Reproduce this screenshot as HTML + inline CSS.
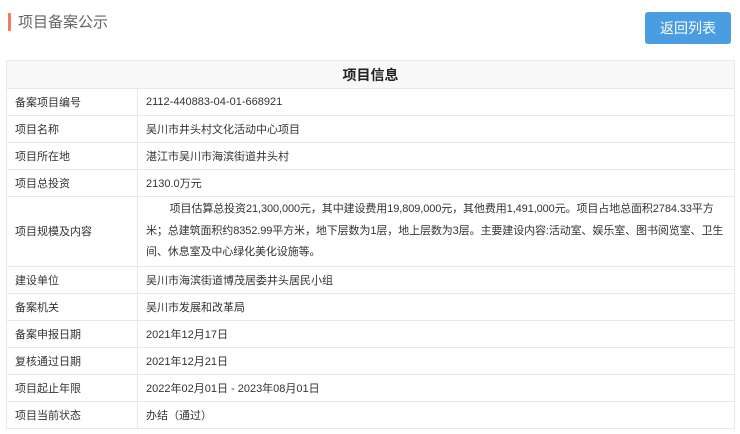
<!DOCTYPE html>
<html><head><meta charset="utf-8"><style>
body{margin:0;width:740px;height:434px;background:#fff;font-family:"Liberation Sans","Noto Sans CJK SC",sans-serif;color:#333;overflow:hidden;position:relative}
.bar{position:absolute;left:8px;top:13px;width:3px;height:18px;background:#f37b5e}
.ttl{position:absolute;left:18px;top:13px;font-size:15px;color:#666;line-height:20px}
.btn{position:absolute;left:645px;top:12px;width:86px;height:32px;background:#4a9de0;border-radius:3px;color:#fff;font-size:14px;line-height:32px;text-align:center}
table{position:absolute;left:6px;top:60px;width:729px;border-collapse:collapse;font-size:11px}
td,th{border:1px solid #e8e8e8;padding:0 8px;height:26px}
th{background:#f8f8f8;font-size:14px;font-weight:bold;color:#222;height:27px}
td.l{width:114px}
td.big{line-height:21.5px;padding-top:2px;padding-bottom:2px;letter-spacing:-0.1px}
</style></head><body>
<div class="bar"></div><div class="ttl">项目备案公示</div>
<div class="btn">返回列表</div>
<table>
<tr><th colspan="2">项目信息</th></tr>
<tr><td class="l">备案项目编号</td><td>2112-440883-04-01-668921</td></tr>
<tr><td class="l">项目名称</td><td>吴川市井头村文化活动中心项目</td></tr>
<tr><td class="l">项目所在地</td><td>湛江市吴川市海滨街道井头村</td></tr>
<tr><td class="l">项目总投资</td><td>2130.0万元</td></tr>
<tr><td class="l">项目规模及内容</td><td class="big">&nbsp;&nbsp;&nbsp;&nbsp;&nbsp;&nbsp;&nbsp;&nbsp;项目估算总投资21,300,000元，其中建设费用19,809,000元，其他费用1,491,000元。项目占地总面积2784.33平方<br>米；总建筑面积约8352.99平方米，地下层数为1层，地上层数为3层。主要建设内容:活动室、娱乐室、图书阅览室、卫生<br>间、休息室及中心绿化美化设施等。</td></tr>
<tr><td class="l">建设单位</td><td>吴川市海滨街道博茂居委井头居民小组</td></tr>
<tr><td class="l">备案机关</td><td>吴川市发展和改革局</td></tr>
<tr><td class="l">备案申报日期</td><td>2021年12月17日</td></tr>
<tr><td class="l">复核通过日期</td><td>2021年12月21日</td></tr>
<tr><td class="l">项目起止年限</td><td>2022年02月01日 - 2023年08月01日</td></tr>
<tr><td class="l">项目当前状态</td><td>办结（通过）</td></tr>
</table>
</body></html>
